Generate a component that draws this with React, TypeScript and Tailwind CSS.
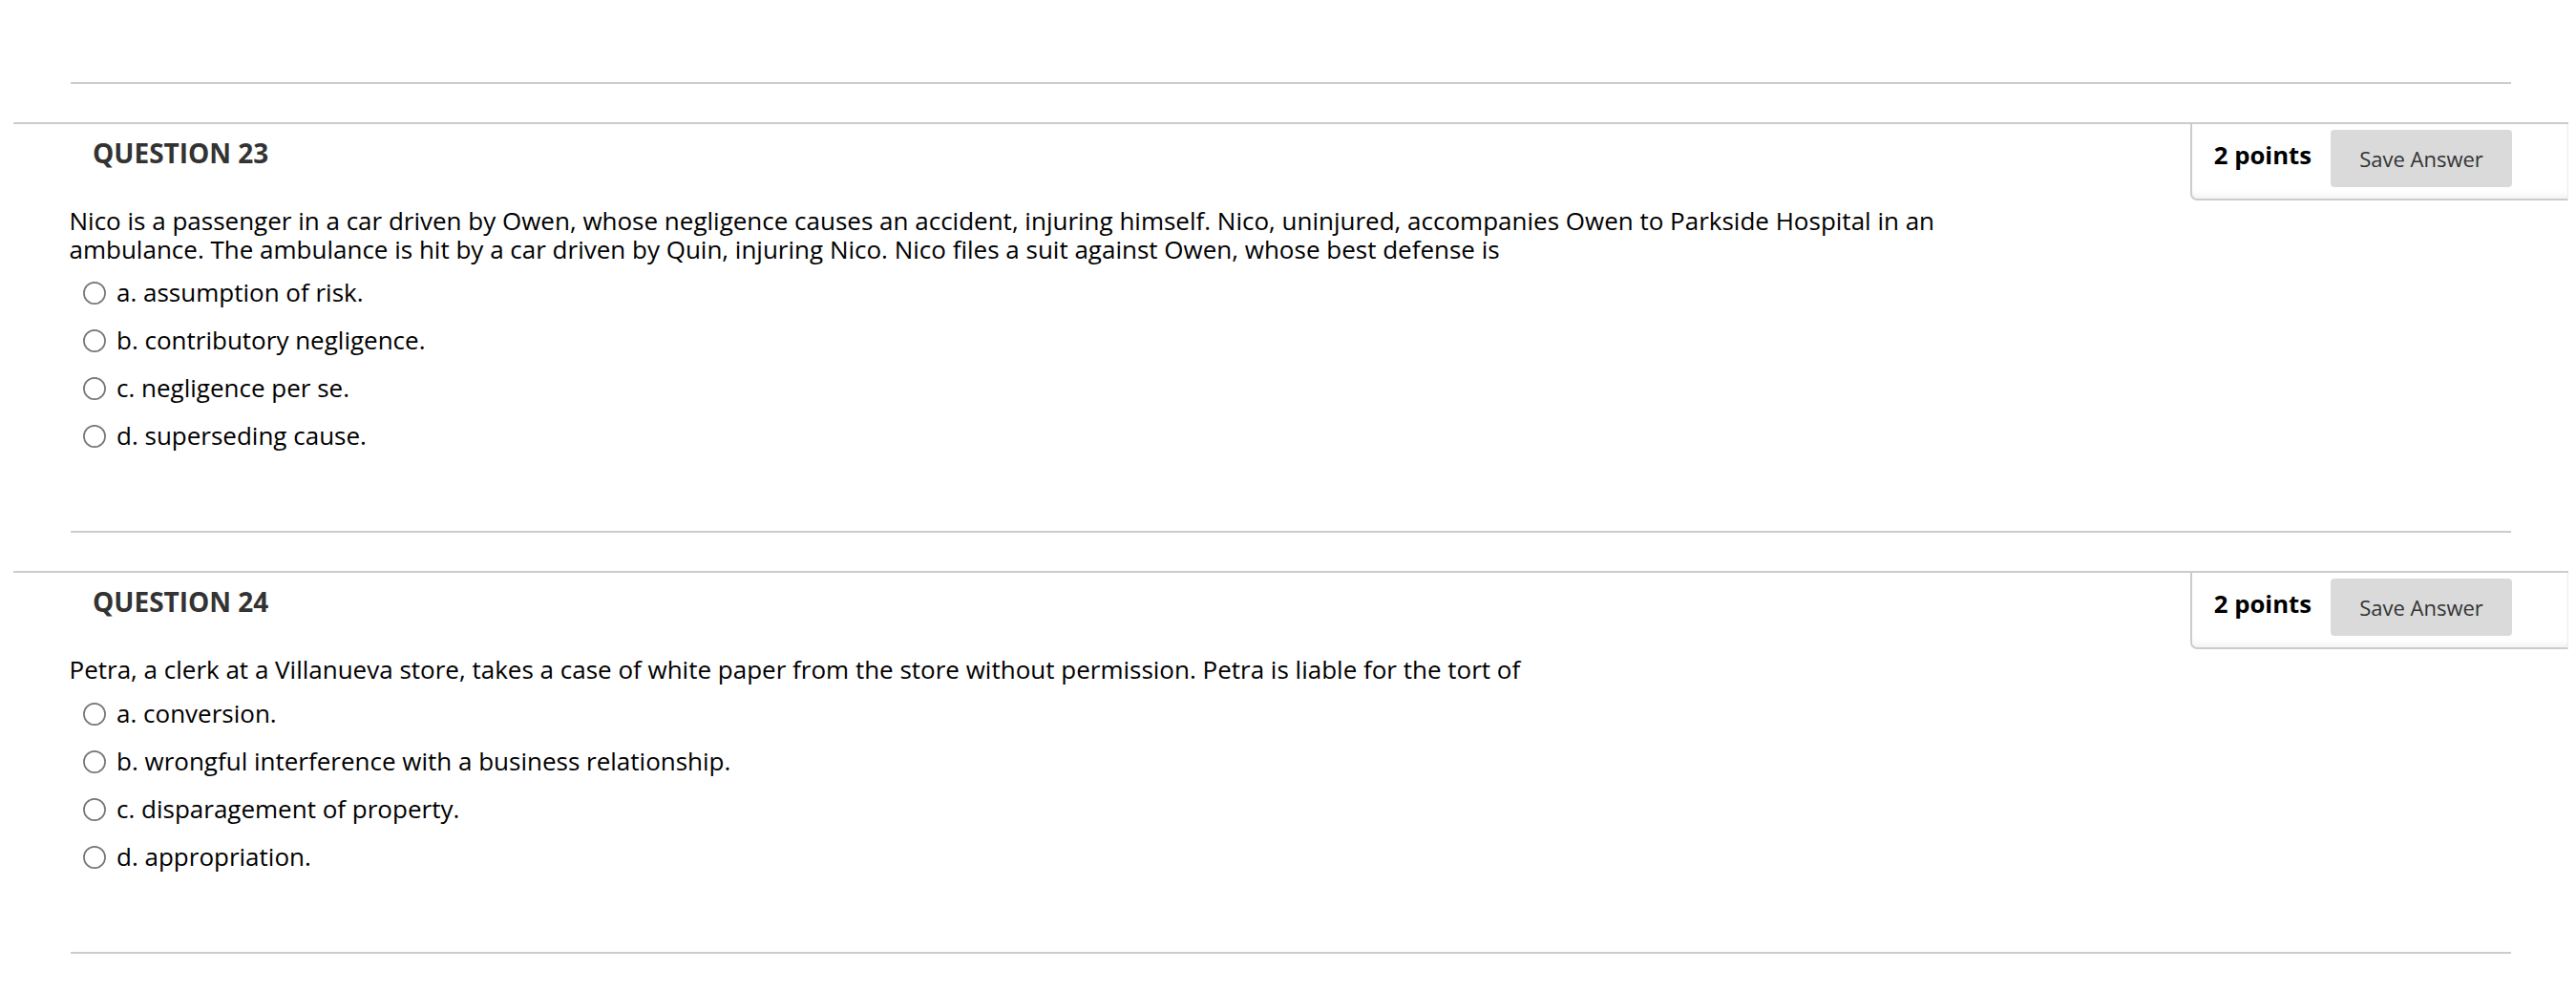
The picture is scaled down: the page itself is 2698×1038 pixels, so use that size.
import type { ReactNode } from 'react';

type Question = {
  number: number;
  points: number;
  text: ReactNode;
  options: string[];
};

const QUESTIONS: Question[] = [
  {
    number: 23,
    points: 2,
    text: 'Nico is a passenger in a car driven by Owen, whose negligence causes an accident, injuring himself. Nico, uninjured, accompanies Owen to Parkside Hospital in an ambulance. The ambulance is hit by a car driven by Quin, injuring Nico. Nico files a suit against Owen, whose best defense is',
    options: ['a. assumption of risk.', 'b. contributory negligence.', 'c. negligence per se.', 'd. superseding cause.'],
  },
  {
    number: 24,
    points: 2,
    text: 'Petra, a clerk at a Villanueva store, takes a case of white paper from the store without permission. Petra is liable for the tort of',
    options: [
      'a. conversion.',
      'b. wrongful interference with a business relationship.',
      'c. disparagement of property.',
      'd. appropriation.',
    ],
  },
];

// plain native-looking radio circle
function Radio() {
  return (
    <svg width="24" height="24" viewBox="0 0 24 24" className="shrink-0">
      <circle cx="12" cy="12" r="11.1" fill="#fff" stroke="#767676" strokeWidth="1.7" />
    </svg>
  );
}

function Separator() {
  return <div className="mx-[60px] h-[2px] bg-[#cccccc]" />;
}

function QuestionBlock({ q }: { q: Question }) {
  return (
    <div className="border-t-2 border-[#cccccc] pb-[74px]">
      {/* heading + points box */}
      <div className="flex items-start justify-between">
        <h3 className="ml-[83px] mt-[12.5px] text-[28px] font-bold leading-[34px] text-[#333333]">
          QUESTION {q.number}
        </h3>
        <div className="flex h-[80px] items-start gap-[20px] rounded-bl-[7px] border-b-2 border-l-2 border-r border-b-[#cccccc] border-l-[#cccccc] border-r-[#ececec] bg-white pl-[23px] pr-[58px] pt-[6px] shadow-[inset_0_-8px_8px_-6px_rgba(0,0,0,0.07)]">
          <span className="mt-[9.5px] text-[25.7px] font-bold leading-[34px] text-black">{q.points} points</span>
          <button className="h-[60px] w-[190px] rounded-[4px] bg-[#dadada] text-[22px] leading-[30px] text-[#333333]">
            Save Answer
          </button>
        </div>
      </div>

      {/* question text */}
      <div className="ml-[58.5px] mt-[7px] w-[2010px] text-[26px] leading-[29.5px] text-black">{q.text}</div>

      {/* answers */}
      <ul className="mt-[6px]">
        {q.options.map((o) => (
          <li key={o} className="ml-[73px] flex h-[50px] items-center gap-[11px]">
            <Radio />
            <span className="text-[26px] leading-[29.5px] text-black">{o}</span>
          </li>
        ))}
      </ul>
    </div>
  );
}

export default function App() {
  return (
    <div
      className="min-h-[1038px] w-[2698px] bg-white"
      style={{ fontFamily: '"Open Sans", "Liberation Sans", sans-serif' }}
    >
      <div className="ml-[14px] w-[2676px] pt-[86px]">
        {QUESTIONS.map((q) => (
          <div key={q.number}>
            <Separator />
            <div className="h-[40px]" />
            <QuestionBlock q={q} />
          </div>
        ))}
        <Separator />
      </div>
    </div>
  );
}
